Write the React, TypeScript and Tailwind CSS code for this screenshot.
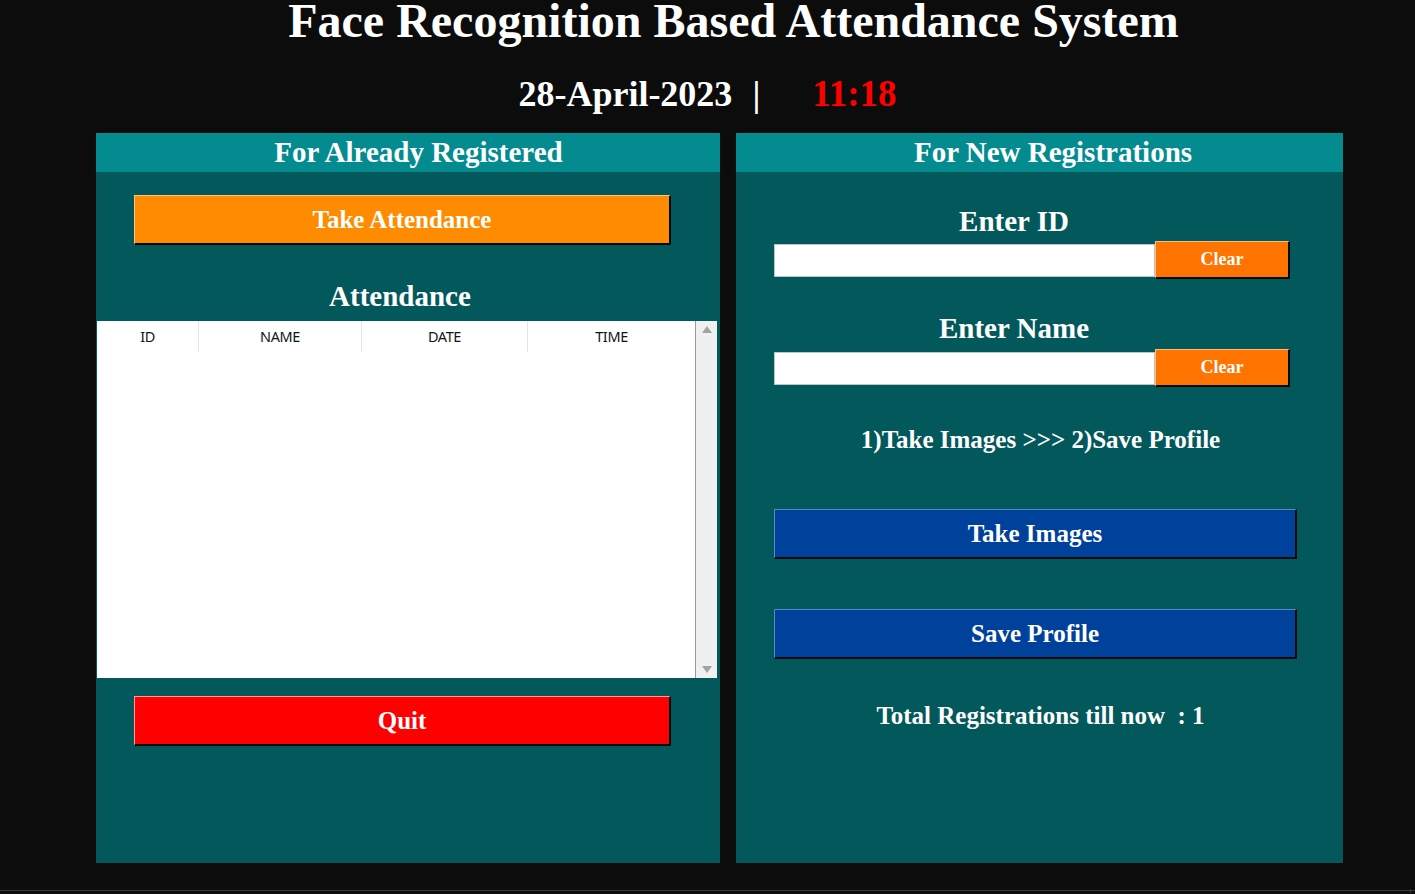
import React from 'react';

const serif = "font-['Liberation_Serif','Times_New_Roman',serif] font-bold";

interface ReliefButtonProps {
    label: string;
    className: string;
}

const ReliefButton: React.FC<ReliefButtonProps> = ({ label, className }) => (
    <button
        className={`flex items-center justify-center border-t border-l border-b-2 border-r-2 border-b-[#0a0a0a] border-r-[#0a0a0a] text-white ${serif} ${className}`}
    >
        {label}
    </button>
);

const AttendanceTable: React.FC = () => {
    const columns = [
        { key: 'id', title: 'ID', width: 'w-[102px]' },
        { key: 'name', title: 'NAME', width: 'w-[163px]' },
        { key: 'date', title: 'DATE', width: 'w-[166px]' },
        { key: 'time', title: 'TIME', width: 'w-[167px]' }
    ];

    return (
        <div className="ml-px flex h-[357px] w-[620px]">
            <div className="flex-1 bg-white">
                <div className="flex h-[31px]">
                    {columns.map((col, i) => (
                        <div
                            key={col.key}
                            className={`flex items-center justify-center text-[14.5px] text-[#151515] font-['Noto_Sans','Open_Sans',sans-serif] tracking-[-0.4px] ${col.width} ${
                                i < columns.length - 1 ? 'border-r border-r-[#e5e5e5]' : ''
                            }`}
                        >
                            {col.title}
                        </div>
                    ))}
                </div>
            </div>
            <div className="flex w-[22px] flex-col items-center justify-between border-l border-l-[#9a9a9a] bg-[#f0f0f0] py-[5px]">
                <svg width="10" height="7" viewBox="0 0 10 7">
                    <path d="M5 0 L10 7 L0 7 Z" fill="#a3a3a3" />
                </svg>
                <svg width="10" height="7" viewBox="0 0 10 7">
                    <path d="M0 0 L10 0 L5 7 Z" fill="#a3a3a3" />
                </svg>
            </div>
        </div>
    );
};

const App: React.FC = () => {
    return (
        <div className="flex h-[894px] w-[1415px] flex-col bg-[#0c0c0c] text-white">
            <h1 className={`h-[42px] pl-[52px] text-center text-[48px] leading-[42px] ${serif}`}>
                Face Recognition Based Attendance System
            </h1>

            <div className={`mt-[34px] flex h-[36px] items-center justify-center text-[36px] leading-[36px] ${serif}`}>
                <span>28-April-2023</span>
                <span className="ml-[20px]">|</span>
                <span className="ml-[52px] text-[37px] text-[#ff0000]">11:18</span>
            </div>

            <div className="mt-[21px] flex gap-4 pl-[96px]">
                {/* left panel */}
                <div className="flex h-[730px] w-[624px] flex-col bg-[#03585c]">
                    <div className={`h-[39px] bg-[#038b8f] pl-[21px] text-center text-[29px] leading-[39px] ${serif}`}>
                        For Already Registered
                    </div>
                    <ReliefButton
                        label="Take Attendance"
                        className="ml-[38px] mt-[23px] h-[50px] w-[537px] border-t-[#ffc580] border-l-[#ffc580] bg-[#ff8c00] text-[25px]"
                    />
                    <div className={`mt-[33px] h-[36px] pr-[16px] text-center text-[29px] leading-[36px] ${serif}`}>
                        Attendance
                    </div>
                    <div className="mt-[7px]">
                        <AttendanceTable />
                    </div>
                    <ReliefButton
                        label="Quit"
                        className="ml-[38px] mt-[18px] h-[50px] w-[537px] border-t-[#ff9a9a] border-l-[#ff9a9a] bg-[#ff0000] text-[25px]"
                    />
                </div>

                {/* right panel */}
                <div className="flex h-[730px] w-[607px] flex-col bg-[#03585c]">
                    <div className={`h-[39px] bg-[#038b8f] pl-[27px] text-center text-[29px] leading-[39px] ${serif}`}>
                        For New Registrations
                    </div>
                    <div className={`mt-[31px] h-[36px] pr-[51px] text-center text-[29px] leading-[36px] ${serif}`}>
                        Enter ID
                    </div>
                    <div className="ml-[38px] mt-[2px] flex h-[38px] items-center">
                        <input className="h-[33px] w-[381px] border border-[#b8c8c8] bg-white outline-none" />
                        <ReliefButton
                            label="Clear"
                            className="h-[38px] w-[135px] border-t-[#ffbb80] border-l-[#ffbb80] bg-[#ff7400] text-[18px]"
                        />
                    </div>
                    <div className={`mt-[31px] h-[36px] pr-[51px] text-center text-[29px] leading-[36px] ${serif}`}>
                        Enter Name
                    </div>
                    <div className="ml-[38px] mt-[3px] flex h-[38px] items-center">
                        <input className="h-[33px] w-[381px] border border-[#b8c8c8] bg-white outline-none" />
                        <ReliefButton
                            label="Clear"
                            className="h-[38px] w-[135px] border-t-[#ffbb80] border-l-[#ffbb80] bg-[#ff7400] text-[18px]"
                        />
                    </div>
                    <div className={`mt-[37px] h-[32px] pl-[2px] text-center text-[25px] leading-[32px] ${serif}`}>
                        1)Take Images &gt;&gt;&gt; 2)Save Profile
                    </div>
                    <ReliefButton
                        label="Take Images"
                        className="ml-[38px] mt-[53px] h-[50px] w-[523px] border-t-[#5a86c4] border-l-[#5a86c4] bg-[#00419b] text-[25px]"
                    />
                    <ReliefButton
                        label="Save Profile"
                        className="ml-[38px] mt-[50px] h-[50px] w-[523px] border-t-[#5a86c4] border-l-[#5a86c4] bg-[#00419b] text-[25px]"
                    />
                    <div className={`mt-[41px] h-[32px] pl-[2px] text-center text-[25px] leading-[32px] whitespace-pre ${serif}`}>
                        {'Total Registrations till now  : 1'}
                    </div>
                </div>
            </div>

            <div className="mt-auto mb-[3px] flex h-px bg-[#3a3a3a]">
                <div className="ml-auto mr-[4px] -mt-px h-[4px] w-px bg-[#3a3a3a]" />
            </div>
        </div>
    );
};

export default App;
